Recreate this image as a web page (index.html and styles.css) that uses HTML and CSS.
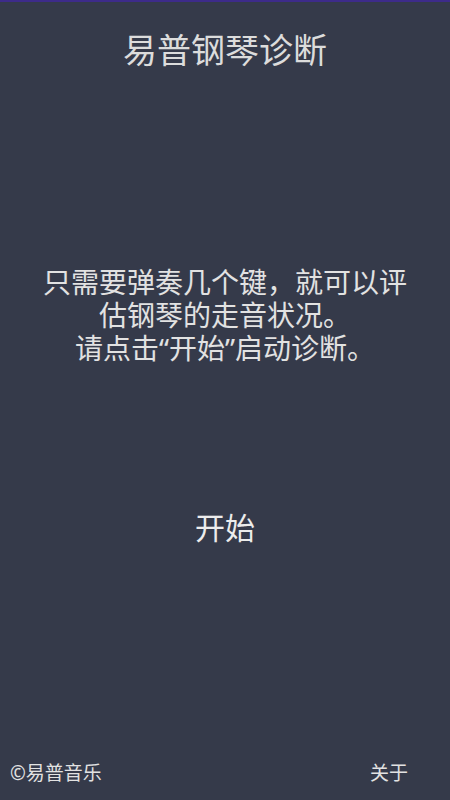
FILE: index.html
```html
<!DOCTYPE html>
<html lang="zh-CN">
<head>
  <meta charset="UTF-8" />
  <meta name="viewport" content="width=device-width, initial-scale=1.0" />
  <title>易普钢琴诊断</title>
  <link rel="stylesheet" href="styles.css">
</head>
<body>
  <div class="app">
    <!-- Header -->
    <div class="title">易普钢琴诊断</div>

    <!-- Intro -->
    <div class="intro">只需要弹奏几个键，就可以评估钢琴的走音状况。<br>请点击“开始”启动诊断。</div>

    <!-- Start -->
    <a href="#" class="start-btn">开始</a>

    <!-- Footer -->
    <div class="footer">
      <span class="copyright">©易普音乐</span>
      <a href="#" class="about-btn">关于</a>
    </div>
  </div>
</body>
</html>
```
FILE: styles.css
```css
* { box-sizing: border-box; margin: 0; padding: 0; }
body {
  background: #353a4a;
  border-top: 2px solid #3d2b8a;
  font-family: "Noto Sans", "Noto Sans CJK TC", sans-serif;
  color: #e2e2e2;
}
.app {
  height: 798px;
  display: flex; flex-direction: column;
  align-items: center;
}
.title {
  margin-top: 28px;
  font-size: 34px; line-height: 40px;
  color: #dcdcdc;
}
.intro {
  margin-top: 196px;
  width: 100%; padding: 0 30px;
  font-size: 28px; line-height: 33px;
  text-align: center;
}
.start-btn {
  margin-top: 143px;
  font-size: 30px; line-height: 40px;
  color: #ececec; text-decoration: none;
}
.footer {
  margin-top: auto; margin-bottom: 8px;
  width: 100%; height: 40px;
  display: flex; justify-content: space-between; align-items: center;
  padding: 0 42px 0 10px;
  font-size: 19px;
}
.about-btn {
  color: #e2e2e2; text-decoration: none;
}
```
